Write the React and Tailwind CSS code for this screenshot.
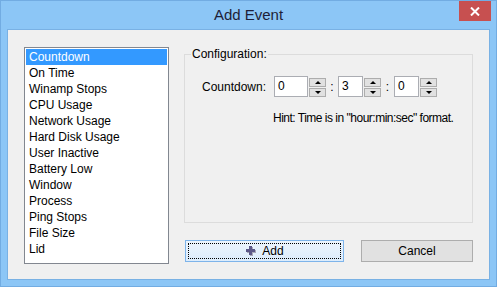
import React, { useState } from "react";

const events = [
  "Countdown",
  "On Time",
  "Winamp Stops",
  "CPU Usage",
  "Network Usage",
  "Hard Disk Usage",
  "User Inactive",
  "Battery Low",
  "Window",
  "Process",
  "Ping Stops",
  "File Size",
  "Lid",
];

const Spinner = () => (
  <div className="flex flex-col gap-[1px] w-[17px] mt-[2px]">
    <div className="h-[9px] border border-[#adadad] bg-[#e1e1e1] flex items-center justify-center">
      <div className="w-0 h-0 border-l-[3px] border-r-[3px] border-b-[3px] border-l-transparent border-r-transparent border-b-black" />
    </div>
    <div className="h-[9px] border border-[#adadad] bg-[#e1e1e1] flex items-center justify-center">
      <div className="w-0 h-0 border-l-[3px] border-r-[3px] border-t-[3px] border-l-transparent border-r-transparent border-t-black" />
    </div>
  </div>
);

const TimeBox = ({ value, width }) => (
  <div
    className={`${width} h-[21px] border border-[#abadb3] bg-white pl-[3px] text-[12px] leading-[19px] text-black`}
  >
    {value}
  </div>
);

const App = () => {
  const [selected, setSelected] = useState(0);

  return (
    <div
      className="w-[497px] h-[287px] bg-[#8cc6f6] border border-[#72ace2] flex flex-col"
      style={{ fontFamily: '"Liberation Sans", Arial, sans-serif' }}
    >
      {/* title bar */}
      <div className="relative h-[28px] flex items-center justify-center">
        <span className="text-[15px] text-[#1e1e38] mt-[1px]">Add Event</span>
        <button className="absolute right-[5px] top-0 w-[32px] h-[20px] bg-[#c75050] flex items-center justify-center">
          <svg width="10" height="9" viewBox="0 0 10 9">
            <path d="M1 0.5 L9 8.5 M9 0.5 L1 8.5" stroke="white" strokeWidth="2" />
          </svg>
        </button>
      </div>

      {/* client area */}
      <div className="mx-[6px] h-[251px] border border-[#79b1e4] bg-[#f0f0f0] flex pl-[16px] pt-[17px] gap-[15px]">
        <div className="w-[145px] h-[217px] border border-[#828790] bg-white p-[1px]">
          {events.map((e, i) => (
            <div
              key={e}
              onClick={() => setSelected(i)}
              className={`h-[16px] pl-[3px] text-[12px] leading-[16px] cursor-default ${
                i === selected ? "bg-[#3399ff] text-white" : "text-black"
              }`}
            >
              {e}
            </div>
          ))}
        </div>

        <div className="w-[289px] flex flex-col">
          <fieldset className="h-[176px] border border-[#dcdcdc]">
            <legend className="ml-[6px] px-[1px] text-[12px] leading-[14px] text-black">
              Configuration:
            </legend>
            <div className="flex items-start mt-[15px] pl-[17px] text-[12px] text-black">
              <span className="leading-[21px] mt-[1px] w-[72px]">Countdown:</span>
              <TimeBox value="0" width="w-[34px]" />
              <div className="ml-[1px]">
                <Spinner />
              </div>
              <span className="w-[12px] text-center leading-[21px] mt-[1px]">:</span>
              <TimeBox value="3" width="w-[25px]" />
              <div className="ml-[1px]">
                <Spinner />
              </div>
              <span className="w-[13px] text-center leading-[21px] mt-[1px]">:</span>
              <TimeBox value="0" width="w-[25px]" />
              <div className="ml-[1px]">
                <Spinner />
              </div>
            </div>
            <div className="mt-[13px] pl-[88px] text-[12px] leading-[14px] text-black whitespace-nowrap tracking-[-0.5px]">
              Hint: Time is in "hour:min:sec" format.
            </div>
          </fieldset>

          <div className="flex mt-[17px] gap-[17px]">
            <button className="ml-[1px] w-[159px] h-[22px] border border-[#7eb4ea] bg-gradient-to-b from-[#ecf4fc] to-[#dcecfc] p-[2px]">
              <div className="h-full border border-dotted border-black flex items-center justify-center gap-[5px] text-[12px] text-black">
                <svg width="12" height="12" viewBox="0 0 12 12">
                  <path d="M5 2 H8 V5 H11 V8 H8 V11 H5 V8 H2 V5 H5 Z" fill="#a8a8b8" />
                  <path d="M4 1 H7 V4 H10 V7 H7 V10 H4 V7 H1 V4 H4 Z" fill="#5c5888" />
                </svg>
                <span>Add</span>
              </div>
            </button>
            <button className="w-[112px] h-[22px] border border-[#adadad] bg-[#e1e1e1] text-[12px] text-black">
              Cancel
            </button>
          </div>
        </div>
      </div>
    </div>
  );
};

export default App;
